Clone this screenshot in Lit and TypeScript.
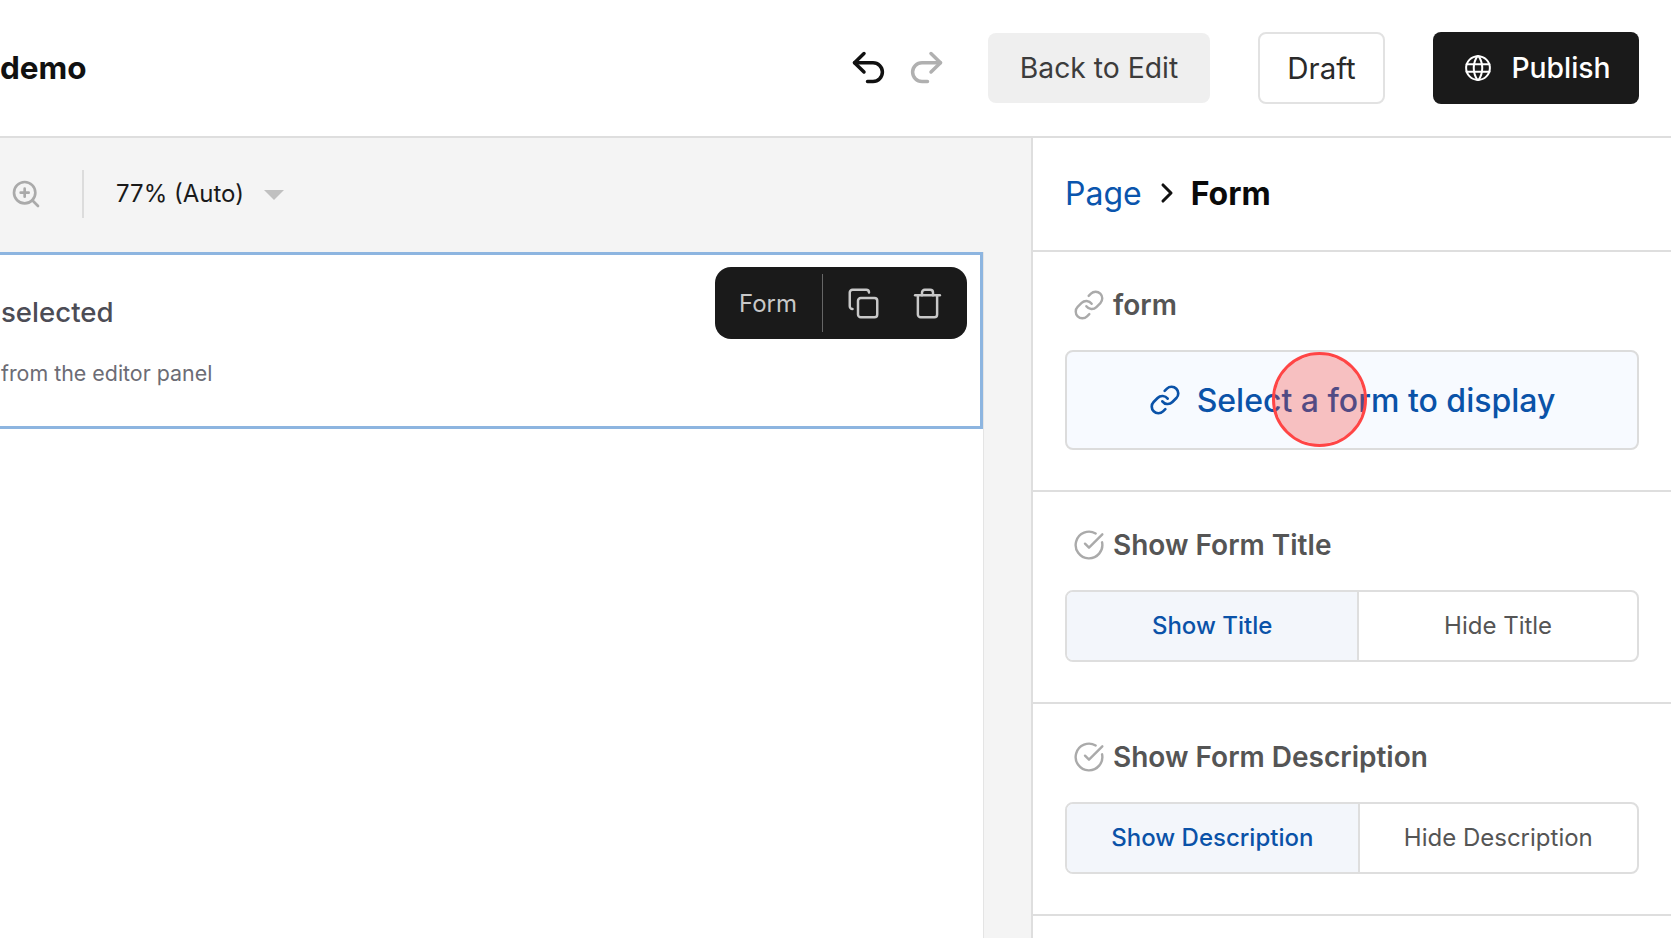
import { LitElement, html, css, svg } from "lit";
import { customElement } from "lit/decorators.js";

const ic = (paths: unknown, cls = "") => html`<svg class="ic ${cls}" viewBox="0 0 24 24" fill="none" stroke="currentColor" stroke-linecap="round" stroke-linejoin="round">${paths}</svg>`;
const hist = (paths: unknown, cls = "") => html`<svg class="ic ${cls}" viewBox="0 0 36 36" fill="none" stroke="currentColor" stroke-linecap="round" stroke-linejoin="round">${paths}</svg>`;
const link = svg`<path d="M10 13a5 5 0 0 0 7.54.54l3-3a5 5 0 0 0-7.07-7.07l-1.72 1.71"/><path d="M14 11a5 5 0 0 0-7.54-.54l-3 3a5 5 0 0 0 7.07 7.07l1.71-1.71"/>`;
const check = svg`<path d="M21.8 10A10 10 0 1 1 17 3.34"/><path d="m9 11 3 3L22 4"/>`;
const undo = svg`<path d="M13 3.5 3.5 12.7 13 22"/><path d="M3.5 12.7H22a9.4 9.4 0 0 1 0 18.8h-5.5"/>`;
const redo = svg`<path d="M23 3.5 32.5 12.7 23 22"/><path d="M32.5 12.7H14a9.4 9.4 0 0 0 0 18.8h5.5"/>`;
const globe = svg`<circle cx="12" cy="12" r="9.5"/><path d="M2.8 9h18.4M2.8 15h18.4"/><path d="M11.5 2.5a17 17 0 0 0 0 19"/><path d="M12.5 2.5a17 17 0 0 1 0 19"/>`;
const zoom = svg`<circle cx="11" cy="11" r="8"/><path d="m21 21-4.3-4.3"/><path d="M11 8v6M8 11h6"/>`;
const copy = svg`<rect x="8" y="8" width="14" height="14" rx="2"/><path d="M4 16c-1.1 0-2-.9-2-2V4c0-1.1.9-2 2-2h10c1.1 0 2 .9 2 2"/>`;
const trash = svg`<path d="M3 6h18"/><path d="M19 6v14a2 2 0 0 1-2 2H7a2 2 0 0 1-2-2V6"/><path d="M8 6V4a2 2 0 0 1 2-2h4a2 2 0 0 1 2 2v2"/>`;

@customElement("app-root")
export class AppRoot extends LitElement {
  static styles = css`
    :host { display: block; width: 1671px; height: 938px; overflow: hidden; background: #fff; font-family: Inter, "Liberation Sans", sans-serif; color: #1a1a1a; }
    * { box-sizing: border-box; }
    .ic { display: block; flex: none; }
    .header { height: 138px; border-bottom: 2px solid #dedede; display: flex; align-items: center; padding: 0 32px 0 0; }
    .title { font-size: 31.5px; font-weight: 700; color: #111; padding-bottom: 2px; }
    .hist { margin-left: auto; display: flex; gap: 21px; margin-right: 44px; }
    .hist .ic { width: 36px; height: 36px; stroke-width: 3.5; color: #111; }
    .hist .off { color: #b0b0b0; }
    .btn { height: 72px; display: flex; align-items: center; justify-content: center; border-radius: 8px; font-size: 28.3px; font-weight: 400; }
    .back { width: 222px; height: 70px; background: #efefef; color: #3c3c3c; }
    .draft { width: 127px; margin-left: 48px; background: #fff; border: 2px solid #e2e2e2; color: #2a2a2a; font-size: 29.5px; }
    .publish { width: 206px; margin-left: 48px; background: #1a1a1a; color: #fff; gap: 18px; font-weight: 500; padding-left: 2px; }
    .publish .ic { width: 30px; height: 30px; stroke-width: 1.6; }
    .main { display: flex; height: 800px; }
    .canvas { width: 1031px; flex: none; background: #f4f4f4; display: flex; flex-direction: column; }
    .tools { height: 114px; padding-bottom: 3px; display: flex; align-items: center; flex: none; color: #1a1a1a; }
    .tools .zoom { width: 32px; height: 32px; stroke-width: 2; color: #aaa; margin-left: 10px; }
    .sep { width: 2px; height: 48px; background: #dcdcdc; margin-left: 40px; }
    .pct { font-size: 24px; margin-left: 32px; }
    .caret { width: 0; height: 0; border-left: 10px solid transparent; border-right: 10px solid transparent; border-top: 10px solid #c0c0c0; margin-left: 20px; margin-top: 2px; }
    .page { width: 984px; flex: 1; background: #fff; border-right: 1px solid #e4e4e4; }
    .block { position: relative; width: 983px; height: 177px; border: 3px solid #8db5e0; border-left: none; padding: 37px 0 0 1px; }
    .h { font-size: 27.6px; font-weight: 500; line-height: 40px; color: #4c4c55; }
    .p { font-size: 21.4px; line-height: 30px; color: #6c6c75; margin-top: 26px; }
    .pill { position: absolute; top: 12px; right: 13px; width: 252px; height: 72px; border-radius: 16px; background: #1a1a1a; color: #c8c8c8; display: flex; align-items: center; }
    .pill span { font-size: 24px; margin-left: 24px; width: 83px; }
    .pill i { width: 1px; height: 58px; background: #666; }
    .pill .ic { width: 33px; height: 33px; stroke-width: 1.8; }
    .pill .c { margin-left: 24px; }
    .pill .t { margin-left: 31px; }
    .panel { flex: 1; border-left: 2px solid #dedede; min-width: 0; }
    .crumb { height: 114px; padding-bottom: 2px; border-bottom: 2px solid #dedede; display: flex; align-items: center; padding-left: 32px; font-size: 32px; }
    .crumb a { color: #0a55ad; }
    .crumb .ic { width: 32px; height: 32px; stroke-width: 2.3; color: #111; margin: 0 8px 0 9px; }
    .crumb b { font-weight: 700; color: #0a0a0a; font-size: 32px; }
    .sec { border-bottom: 2px solid #dedede; padding: 33px 32px 40px 32px; }
    .label { display: flex; align-items: center; height: 40px; padding-left: 8px; font-size: 28px; font-weight: 600; color: #555; gap: 8px; }
    .label .ic { width: 32px; height: 32px; stroke-width: 1.8; color: #aaa; }
    .select { position: relative; margin-top: 25px; height: 100px; border: 2px solid #dcdcdc; border-radius: 8px; background: #f7faff; color: #0a52a8; display: flex; align-items: center; justify-content: center; gap: 16px; font-size: 32px; font-weight: 500; }
    .select .ic { width: 32px; height: 32px; stroke-width: 2; }
    .dot { position: absolute; left: 205px; top: 0px; width: 95px; height: 95px; border-radius: 50%; background: rgba(250, 60, 50, 0.3); background-clip: padding-box; border: 3px solid #ff4545; }
    .toggle { margin-top: 25px; height: 72px; border: 2px solid #dedede; border-radius: 8px; display: flex; overflow: hidden; font-size: 24px; }
    .toggle div { flex: 1 1 auto; display: flex; align-items: center; justify-content: center; color: #555; padding-bottom: 1px; }
    .toggle .on { background: #f3f6fb; color: #0a52a8; font-weight: 500; border-right: 2px solid #dedede; }
  `;

  private toggle(a: string, b: string) {
    return html`<div class="toggle"><div class="on">${a}</div><div>${b}</div></div>`;
  }

  render() {
    return html`
      <div class="header">
        <div class="title">demo</div>
        <div class="hist">${hist(undo)}${hist(redo, "off")}</div>
        <div class="btn back">Back to Edit</div>
        <div class="btn draft">Draft</div>
        <div class="btn publish">${ic(globe)}Publish</div>
      </div>
      <div class="main">
        <div class="canvas">
          <div class="tools">
            ${ic(zoom, "zoom")}
            <div class="sep"></div>
            <div class="pct">77% (Auto)</div>
            <div class="caret"></div>
          </div>
          <div class="page">
            <div class="block">
              <div class="h">selected</div>
              <div class="p">from the editor panel</div>
              <div class="pill">
                <span>Form</span><i></i>
                ${ic(copy, "c")}${ic(trash, "t")}
              </div>
            </div>
          </div>
        </div>
        <div class="panel">
          <div class="crumb"><a>Page</a>${ic(svg`<path d="m9 6 6 6-6 6"/>`)}<b>Form</b></div>
          <div class="sec">
            <div class="label">${ic(link)}form</div>
            <div class="select">${ic(link)}Select a form to display<div class="dot"></div></div>
          </div>
          <div class="sec">
            <div class="label">${ic(check)}Show Form Title</div>
            ${this.toggle("Show Title", "Hide Title")}
          </div>
          <div class="sec">
            <div class="label">${ic(check)}Show Form Description</div>
            ${this.toggle("Show Description", "Hide Description")}
          </div>
        </div>
      </div>
    `;
  }
}
